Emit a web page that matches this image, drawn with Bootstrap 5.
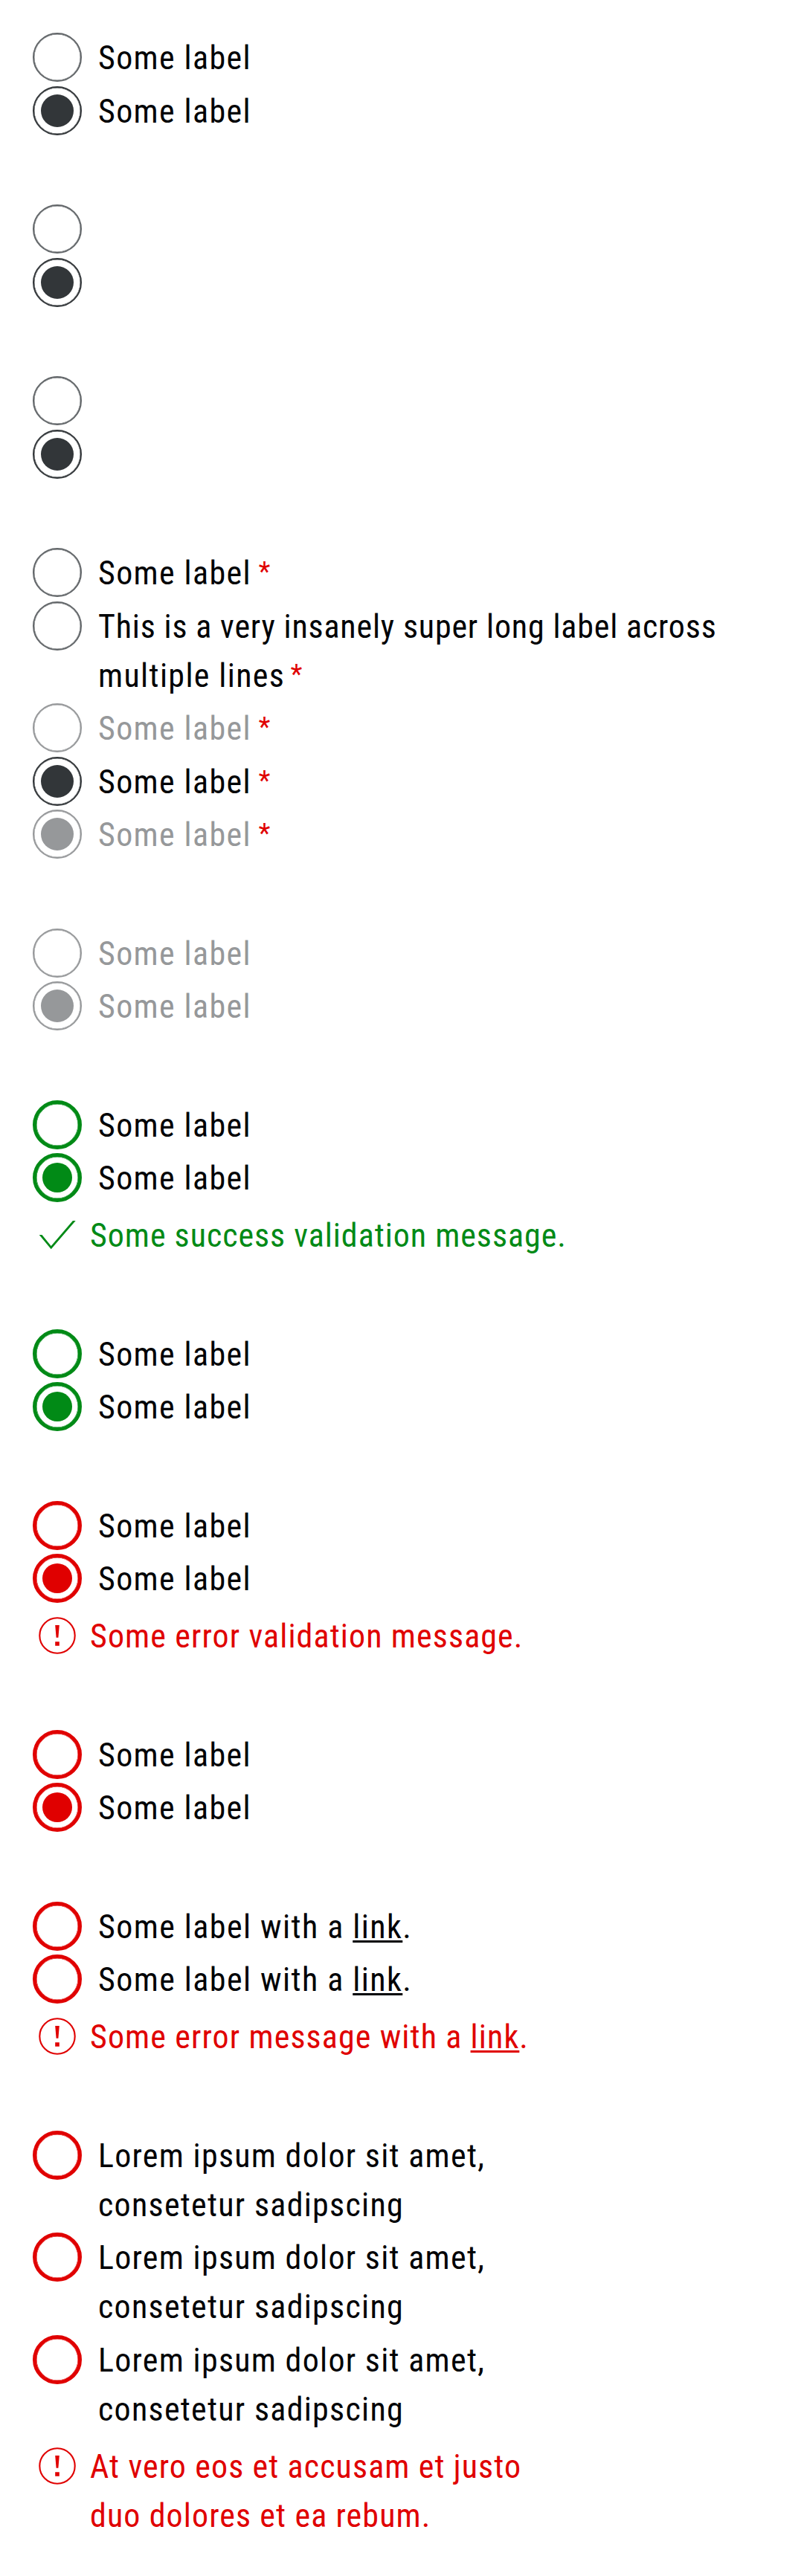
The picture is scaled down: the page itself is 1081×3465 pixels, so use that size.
<!DOCTYPE html>
<html lang="en">
<head>
<meta charset="utf-8">
<meta name="viewport" content="width=device-width, initial-scale=1">
<title>Radio button states</title>
<link href="https://cdn.jsdelivr.net/npm/bootstrap@5.3.0/dist/css/bootstrap.min.css" rel="stylesheet">
<style>
  :root { --ink: #010205; --line: #626669; --strong: #323639; --off: #96989a; --ok: #018a16; --bad: #e00000; }
  body { font-family: "Roboto Condensed", Roboto, sans-serif; font-size: 44px; line-height: 66px; letter-spacing: 1.35px; color: var(--ink); background: #fff; }
  main { padding: 44px; }
  .radio-set { gap: 5.5px; margin-bottom: 93.5px; }
  .option { gap: 22px; min-height: 66px; }
  .option .form-check-input { width: 66px; height: 66px; margin: 0; padding: 9px; float: none; flex: none; opacity: 1; border: 2px solid var(--line); background: #fff; box-shadow: inset 0 0 0 .4px var(--line); }
  .option .form-check-input:checked { border-color: var(--strong); background: var(--strong) content-box; box-shadow: inset 0 0 0 .4px var(--strong); }
  .option .form-check-input:disabled { border-color: var(--off); opacity: 1; box-shadow: inset 0 0 0 .4px var(--off); }
  .option .form-check-input:disabled:checked { background: var(--off) content-box; }
  .option.off label { color: var(--off); }
  .valid-set .form-check-input, .valid-set .form-check-input:checked { border: 5px solid var(--ok); padding: 8px; box-shadow: inset 0 0 0 .5px var(--ok); }
  .valid-set .form-check-input:checked { background: var(--ok) content-box; }
  .error-set .form-check-input, .error-set .form-check-input:checked { border: 5px solid var(--bad); padding: 8px; box-shadow: inset 0 0 0 .5px var(--bad); }
  .error-set .form-check-input:checked { background: var(--bad) content-box; }
  .option label, .message p { padding-top: 1px; margin: 0 0 -1px; white-space: nowrap; }
  .message { gap: 11px; margin-top: 5.5px; }
  .message svg { width: 66px; height: 66px; flex: none; }
  .msg-ok { color: var(--ok); letter-spacing: .97px; }
  .msg-bad { color: var(--bad); letter-spacing: 1.1px; }
  .tight { letter-spacing: .82px; }
  .linked { letter-spacing: 1.42px; }
  .lorem { letter-spacing: 1.28px; }
  .req { color: var(--bad); font-size: 36px; line-height: 0; letter-spacing: 0; margin-left: -1.5px; position: relative; top: -5px; }
  .tight ~ .req { margin-left: -4px; }
  .option a, .message a { color: inherit; text-decoration: underline; text-decoration-thickness: 3px; text-underline-offset: 3px; text-decoration-skip-ink: none; }
</style>
</head>
<body>
<svg class="d-none" aria-hidden="true">
  <symbol id="tick" viewBox="0 0 66 66"><path d="M8.7 33h3.8l12.2 14.9L53.9 14h3.8L24.7 52.3z" fill="currentColor"/></symbol>
  <symbol id="alert" viewBox="0 0 66 66"><circle cx="33" cy="33" r="23.7" fill="none" stroke="currentColor" stroke-width="2.1"/><path d="M30.2 19h5.6l-1.4 16.7h-2.8zM30.2 41.3h5.6v5.5h-5.6z" fill="currentColor"/></symbol>
</svg>
<main class="d-flex flex-column">
  <section class="radio-set d-flex flex-column">
    <div class="option d-flex align-items-start"><input class="form-check-input" type="radio" name="a" id="a1"><label for="a1">Some label</label></div>
    <div class="option d-flex align-items-start"><input class="form-check-input" type="radio" name="a" id="a2" checked><label for="a2">Some label</label></div>
  </section>
  <section class="radio-set d-flex flex-column">
    <div class="option d-flex align-items-start"><input class="form-check-input" type="radio" name="b"></div>
    <div class="option d-flex align-items-start"><input class="form-check-input" type="radio" name="b" checked></div>
  </section>
  <section class="radio-set d-flex flex-column">
    <div class="option d-flex align-items-start"><input class="form-check-input" type="radio" name="c"></div>
    <div class="option d-flex align-items-start"><input class="form-check-input" type="radio" name="c" checked></div>
  </section>
  <section class="radio-set d-flex flex-column">
    <div class="option d-flex align-items-start"><input class="form-check-input" type="radio" name="d"><label>Some label <span class="req">*</span></label></div>
    <div class="option d-flex align-items-start"><input class="form-check-input" type="radio" name="d"><label><span class="tight">This is a very insanely super long label across</span><br>multiple lines <span class="req">*</span></label></div>
    <div class="option off d-flex align-items-start"><input class="form-check-input" type="radio" name="d" disabled><label>Some label <span class="req">*</span></label></div>
    <div class="option d-flex align-items-start"><input class="form-check-input" type="radio" name="d" checked><label>Some label <span class="req">*</span></label></div>
    <div class="option off d-flex align-items-start"><input class="form-check-input" type="radio" name="d2" checked disabled><label>Some label <span class="req">*</span></label></div>
  </section>
  <section class="radio-set d-flex flex-column">
    <div class="option off d-flex align-items-start"><input class="form-check-input" type="radio" name="e" disabled><label>Some label</label></div>
    <div class="option off d-flex align-items-start"><input class="form-check-input" type="radio" name="e" checked disabled><label>Some label</label></div>
  </section>
  <section class="radio-set valid-set d-flex flex-column">
    <div class="option d-flex align-items-start"><input class="form-check-input" type="radio" name="f"><label>Some label</label></div>
    <div class="option d-flex align-items-start"><input class="form-check-input" type="radio" name="f" checked><label>Some label</label></div>
    <div class="message msg-ok d-flex align-items-start"><svg><use href="#tick"/></svg><p>Some success validation message.</p></div>
  </section>
  <section class="radio-set valid-set d-flex flex-column">
    <div class="option d-flex align-items-start"><input class="form-check-input" type="radio" name="g"><label>Some label</label></div>
    <div class="option d-flex align-items-start"><input class="form-check-input" type="radio" name="g" checked><label>Some label</label></div>
  </section>
  <section class="radio-set error-set d-flex flex-column">
    <div class="option d-flex align-items-start"><input class="form-check-input" type="radio" name="h"><label>Some label</label></div>
    <div class="option d-flex align-items-start"><input class="form-check-input" type="radio" name="h" checked><label>Some label</label></div>
    <div class="message msg-bad d-flex align-items-start"><svg><use href="#alert"/></svg><p>Some error validation message.</p></div>
  </section>
  <section class="radio-set error-set d-flex flex-column">
    <div class="option d-flex align-items-start"><input class="form-check-input" type="radio" name="i"><label>Some label</label></div>
    <div class="option d-flex align-items-start"><input class="form-check-input" type="radio" name="i" checked><label>Some label</label></div>
  </section>
  <section class="radio-set error-set linked d-flex flex-column">
    <div class="option d-flex align-items-start"><input class="form-check-input" type="radio" name="j"><label>Some label with a <a href="#">link</a>.</label></div>
    <div class="option d-flex align-items-start"><input class="form-check-input" type="radio" name="j"><label>Some label with a <a href="#">link</a>.</label></div>
    <div class="message msg-bad d-flex align-items-start"><svg><use href="#alert"/></svg><p>Some error message with a <a href="#">link</a>.</p></div>
  </section>
  <section class="radio-set error-set lorem d-flex flex-column mb-0">
    <div class="option d-flex align-items-start"><input class="form-check-input" type="radio" name="k"><label>Lorem ipsum dolor sit amet,<br>consetetur sadipscing</label></div>
    <div class="option d-flex align-items-start"><input class="form-check-input" type="radio" name="k"><label>Lorem ipsum dolor sit amet,<br>consetetur sadipscing</label></div>
    <div class="option d-flex align-items-start"><input class="form-check-input" type="radio" name="k"><label>Lorem ipsum dolor sit amet,<br>consetetur sadipscing</label></div>
    <div class="message msg-bad d-flex align-items-start"><svg><use href="#alert"/></svg><p>At vero eos et accusam et justo<br>duo dolores et ea rebum.</p></div>
  </section>
</main>
<script src="https://cdn.jsdelivr.net/npm/bootstrap@5.3.0/dist/js/bootstrap.bundle.min.js"></script>
</body>
</html>
